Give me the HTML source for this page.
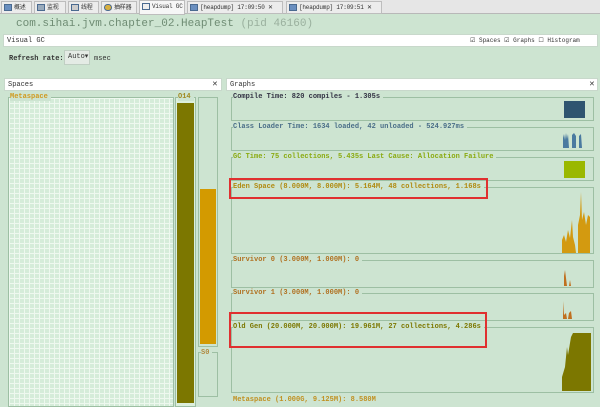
<!DOCTYPE html>
<html><head><meta charset="utf-8"><style>
*{margin:0;padding:0;box-sizing:border-box}
body{width:600px;height:400px;overflow:hidden;background:#cde4d1;font-family:"Liberation Mono","Noto Sans CJK SC",monospace;font-size:7px;color:#333;position:relative;white-space:nowrap}
.a{position:absolute}
.tabs{left:0;top:0;width:600px;height:14px;background:#e6e6e6;border-bottom:1px solid #b8b8b8}
.tab{position:absolute;top:1px;height:13px;background:#ececec;border:1px solid #bdbdbd;font-size:6px;line-height:11px;padding-left:12px;color:#333;overflow:hidden;letter-spacing:-0.2px}
.tab i{position:absolute;left:2px;top:2px;width:8px;height:7px;background:#6a8fc0;border:1px solid #4a6a90}
.box{position:absolute;border:1px solid #9dbfa3}
.lbl{position:absolute;background:#cde4d1;padding-right:3px;font-weight:bold;font-size:7px;line-height:8px}
.bar{position:absolute;background:#fff;height:13px;border:1px solid #c8d8cb}
</style></head><body>
<div class="a tabs"></div>
<div class="tab" style="left:1px;width:31px"><i></i>概述</div>
<div class="tab" style="left:34px;width:32px"><i style="background:#9ab"></i>监视</div>
<div class="tab" style="left:68px;width:31px"><i style="background:#ccc"></i>线程</div>
<div class="tab" style="left:101px;width:36px"><i style="background:#d8b040;border-radius:4px"></i>抽样器</div>
<div class="tab" style="left:139px;width:46px;background:#f6f6f6;top:0;height:15px"><i style="background:#eee"></i>Visual GC</div>
<div class="tab" style="left:187px;width:96px"><i></i>[heapdump] 17:09:50 ✕</div>
<div class="tab" style="left:286px;width:96px"><i></i>[heapdump] 17:09:51 ✕</div>
<div class="a" style="left:16px;top:18px;font-size:11px;color:#6f8c74;font-family:'Liberation Mono',monospace">com.sihai.jvm.chapter_02.HeapTest <span style="color:#9ab09e">(pid 46160)</span></div>
<div class="bar" style="left:3px;top:34px;width:595px"></div>
<div class="a" style="left:7px;top:37px">Visual GC</div>
<div class="a" style="left:470px;top:37px;font-size:6px">☑ Spaces ☑ Graphs ☐ Histogram</div>
<div class="a" style="left:9px;top:55px;font-weight:bold">Refresh rate:</div>
<div class="a" style="left:64px;top:50px;width:26px;height:15px;background:#e4ebe5;border:1px solid #c0cfc3;line-height:13px;padding-left:3px">Auto▾</div>
<div class="a" style="left:94px;top:55px">msec</div>
<div class="bar" style="left:4px;top:78px;width:218px"></div>
<div class="a" style="left:8px;top:81px">Spaces</div><div class="a" style="left:212px;top:80px">✕</div>
<div class="bar" style="left:226px;top:78px;width:372px"></div>
<div class="a" style="left:230px;top:81px">Graphs</div><div class="a" style="left:589px;top:80px">✕</div>
<div class="box" style="left:8px;top:97px;width:166px;height:310px;background-color:#d5ecd9;background-image:linear-gradient(#eef8ef 1px,transparent 1px),linear-gradient(90deg,#eef8ef 1px,transparent 1px);background-size:5px 5px"></div>
<div class="lbl" style="left:10px;top:93px;color:#d09a20">Metaspace</div>
<div class="box" style="left:175px;top:97px;width:21px;height:310px;background:#dcefdc"></div>
<div class="a" style="left:177px;top:103px;width:17px;height:300px;background:#7c7700"></div>
<div class="lbl" style="left:178px;top:93px;color:#a08a20">O14</div>
<div class="box" style="left:198px;top:97px;width:20px;height:250px"></div>
<div class="a" style="left:200px;top:189px;width:16px;height:155px;background:#d39a00"></div>
<div class="box" style="left:198px;top:352px;width:20px;height:45px"></div>
<div class="lbl" style="left:201px;top:349px;color:#b08a40">S0</div>
<div class="box" style="left:231px;top:97px;width:363px;height:24px"></div>
<div class="lbl" style="left:233px;top:93px;color:#334">Compile Time: 820 compiles - 1.305s</div>
<div class="a" style="left:564px;top:101px;width:21px;height:17px;background:#2f5570"></div>
<div class="box" style="left:231px;top:127px;width:363px;height:24px"></div>
<div class="lbl" style="left:233px;top:123px;color:#4a6e88">Class Loader Time: 1634 loaded, 42 unloaded - 524.927ms</div>
<svg class="a" style="left:562px;top:130px" width="26" height="18"><path d="M1 18V8L2 4L3 10L4 3L5 9L6 4L7 18ZM10 18V5L12 3L14 6V18ZM17 18V6L19 4L20 18Z" fill="#4a7aa0"/></svg>
<div class="box" style="left:231px;top:157px;width:363px;height:24px"></div>
<div class="lbl" style="left:233px;top:153px;color:#8aaa10">GC Time: 75 collections, 5.435s  Last Cause: Allocation Failure</div>
<div class="a" style="left:564px;top:161px;width:21px;height:17px;background:#9ab800"></div>
<div class="box" style="left:231px;top:187px;width:363px;height:67px"></div>
<div class="lbl" style="left:233px;top:183px;color:#b08a10">Eden Space (8.000M, 8.000M): 5.164M, 48 collections, 1.168s</div>
<svg class="a" style="left:562px;top:190px" width="32" height="63"><path d="M0 63V50L2 45L4 52L6 40L8 48L10 30L11 47L13 55L14 63ZM16 63V35L18 25L19 2L20 30L22 22L24 35L26 25L28 27V63Z" fill="#d39a10"/></svg>
<div class="box" style="left:231px;top:260px;width:363px;height:28px"></div>
<div class="lbl" style="left:233px;top:256px;color:#b07020">Survivor 0 (3.000M, 1.000M): 0</div>
<svg class="a" style="left:562px;top:266px" width="20" height="20"><path d="M2 20V10L3 4L4 12L5 20ZM7 20L8 14L9 20Z" fill="#c07020"/></svg>
<div class="box" style="left:231px;top:293px;width:363px;height:28px"></div>
<div class="lbl" style="left:233px;top:289px;color:#b07020">Survivor 1 (3.000M, 1.000M): 0</div>
<svg class="a" style="left:562px;top:297px" width="20" height="22"><path d="M1 22V4L2 18L4 16L5 22ZM6 22L7 16L9 14L10 22Z" fill="#c07020"/></svg>
<div class="box" style="left:231px;top:327px;width:363px;height:66px"></div>
<div class="lbl" style="left:233px;top:323px;color:#7c7700">Old Gen (20.000M, 20.000M): 19.961M, 27 collections, 4.286s</div>
<svg class="a" style="left:562px;top:327px" width="31" height="66"><path d="M0 64V50L3 40L5 20L6 28L9 10L11 6H29V64Z" fill="#7c7700"/></svg>
<div class="lbl" style="left:233px;top:396px;color:#c09020">Metaspace (1.000G, 9.125M): 8.580M</div>
<div class="a" style="left:229px;top:178px;width:259px;height:21px;border:2px solid #e03030"></div>
<div class="a" style="left:229px;top:312px;width:258px;height:36px;border:2px solid #e03030"></div>
</body></html>
